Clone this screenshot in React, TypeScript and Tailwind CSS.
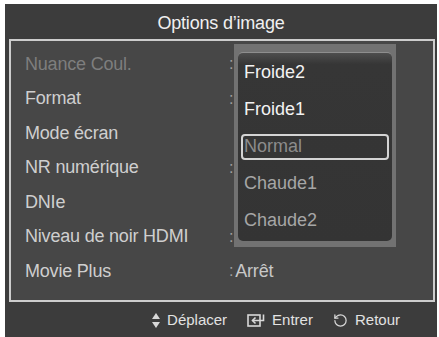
import React from 'react';
import { RotateCcw } from 'lucide-react';

const rows = [
  { label: 'Nuance Coul.', colon: true, dim: true },
  { label: 'Format', colon: true },
  { label: 'Mode écran', colon: false },
  { label: 'NR numérique', colon: true },
  { label: 'DNIe', colon: false },
  { label: 'Niveau de noir HDMI', colon: true },
  { label: 'Movie Plus', colon: true, value: 'Arrêt' },
];

const options = [
  { name: 'Froide2', tone: 'text-[#f2f2f2]' },
  { name: 'Froide1', tone: 'text-[#f2f2f2]' },
  { name: 'Normal', tone: 'text-[#8c8c8c]', selected: true },
  { name: 'Chaude1', tone: 'text-[#a6a6a6]' },
  { name: 'Chaude2', tone: 'text-[#a6a6a6]' },
];

const UpDown = () => (
  <svg width="8" height="15" viewBox="0 0 8 15" className="fill-[#d8d8d8]">
    <polygon points="4,0 8,6 0,6" />
    <polygon points="0,9 8,9 4,15" />
  </svg>
);

const EnterIcon = () => (
  <svg width="18" height="13" viewBox="0 0 18 13" fill="none" className="stroke-[#d8d8d8]" strokeWidth="1.6">
    <rect x="1" y="1" width="12" height="11" />
    <path d="M16.5 0.5 V6.5 H5.5" />
    <path d="M8.5 3.5 L5.5 6.5 L8.5 9.5" />
  </svg>
);

export default function App() {
  return (
    <div className="w-[439px] h-[337px] bg-white pt-[4px] pl-[5px] overflow-hidden font-['Liberation_Sans',Arial,sans-serif]">
      <div className="w-[432px] h-[333px] bg-[#3c3c3c] flex flex-col">
        <div className="h-[35px] pt-[3px] flex items-center justify-center text-[18px] text-[#f0f0f0] tracking-[-0.2px]">
          Options d’image
        </div>

        <div className="relative ml-[4px] mr-[2px] h-[263px] border-2 border-[#cdcdcd] bg-[#474747] pt-[6px]">
          {rows.map((r) => (
            <div key={r.label} className="h-[34.5px] flex items-center text-[18px] tracking-[-0.2px]">
              <div className={`w-[218px] pl-[14px] ${r.dim ? 'text-[#7e7e7e]' : 'text-[#cfcfcf]'}`}>{r.label}</div>
              {r.colon && (
                <div className="text-[#a0a0a0] flex items-center">
                  <span className="text-[16px]">:</span>
                  {r.value && <span className="ml-[2px] text-[#c8c8c8]">{r.value}</span>}
                </div>
              )}
            </div>
          ))}

          <div className="absolute left-[223px] top-[3px] w-[162px] h-[203px] bg-[#727272] px-[4px] pt-[8px] pb-[6px]">
            <div className="h-full rounded-[5px] border-t border-[#8e8e8e] bg-gradient-to-b from-[#4e4e4e] via-[#363636] via-[6%] to-[#343434] pt-[1px]">
              {options.map((o) => (
                <div key={o.name} className="h-[37px] flex items-center px-[3px] text-[18px]">
                  {o.selected ? (
                    <div className={`w-full h-[26px] rounded-[4px] border-2 border-[#d4d4d4] flex items-center pl-[1px] ${o.tone}`}>
                      {o.name}
                    </div>
                  ) : (
                    <div className={`pl-[3px] ${o.tone}`}>{o.name}</div>
                  )}
                </div>
              ))}
            </div>
          </div>
        </div>

        <div className="flex-1 flex items-center justify-end pr-[37px] text-[15px] text-[#e2e2e2] pt-[2px]">
          <UpDown />
          <span className="ml-[7px]">Déplacer</span>
          <span className="ml-[20px] flex items-center"><EnterIcon /></span>
          <span className="ml-[7px]">Entrer</span>
          <RotateCcw className="ml-[20px] text-[#d8d8d8]" size={15} strokeWidth={2} />
          <span className="ml-[7px]">Retour</span>
        </div>
      </div>
    </div>
  );
}
